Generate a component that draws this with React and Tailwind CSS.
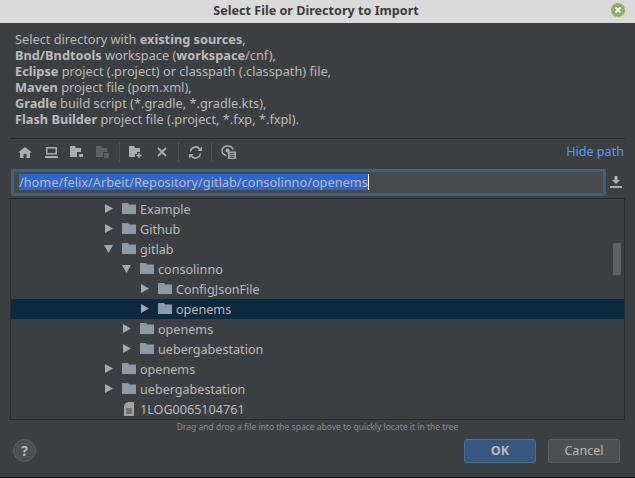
import React from "react";

const font = { fontFamily: '"Noto Sans", sans-serif' };

const Folder = () => (
  <svg width="14" height="12" viewBox="0 0 14 12" className="shrink-0 mr-[4px]">
    <path d="M0 0h6l1 1.500h7V11H0z" fill="#8c9aa5" />
  </svg>
);

const Arrow = ({ open }) => (
  <svg width="9" height="9" viewBox="0 0 9 9" className="shrink-0 mb-[1px]">
    {open ? <path d="M0 1h9L4.500 9z" fill="#a8a8a8" /> : <path d="M1 0l8 4.500L1 9z" fill="#a8a8a8" />}
  </svg>
);

const Row = ({ depth, open, label, selected, file }) => (
  <div className={`h-5 flex items-center shrink-0 ${selected ? "bg-[#0d293e]" : ""}`}>
    <div className="flex items-center" style={{ paddingLeft: depth }}>
      <div className="w-[18px] flex">{!file && <Arrow open={open} />}</div>
      {file ? (
        <div className="w-[14px] mr-[4px] flex justify-center shrink-0">
          <svg width="10" height="14" viewBox="0 0 10 14">
            <path d="M4 0h6v14H0V4z" fill="#a0a4a7" />
            <path d="M0 3l3-3v3z" fill="#a0a4a7" />
            <path d="M2 7h6M2 9h6M2 11h6" stroke="#3c3f41" strokeWidth="1" />
          </svg>
        </div>
      ) : (
        <Folder />
      )}
      <span className="text-[12.6px] text-[#bbbbbb] leading-none pt-[2px]">{label}</span>
    </div>
  </div>
);

const Sep = () => <div className="w-px h-5 bg-[#515151] mx-[3px]" />;

const Btn = ({ children }) => <div className="w-[26px] h-5 flex items-center justify-center">{children}</div>;

export default function App() {
  return (
    <div className="w-[635px] h-[478px] flex flex-col bg-[#3c3f41] text-[#bbbbbb] overflow-hidden" style={font}>
      <div className="h-[23px] shrink-0 bg-[#dadada] relative flex items-center justify-center">
        <span className="font-bold text-[12.6px] text-[#3c3c3c] mr-[3px]">Select File or Directory to Import</span>
        <div className="absolute left-[611px] top-[3px] w-[14px] h-[14px] rounded-full bg-[#8eb163] flex items-center justify-center">
          <svg width="8" height="8" viewBox="0 0 8 8"><path d="M1.500 1.500l5 5M6.500 1.500l-5 5" stroke="#fff" strokeWidth="1.800" /></svg>
        </div>
      </div>
      <div className="pl-[15px] pt-[8px] text-[12.75px] leading-4 h-[115px] shrink-0">
        <div>Select directory with <b>existing sources</b>,</div>
        <div><b>Bnd/Bndtools</b> workspace (<b>workspace</b>/cnf),</div>
        <div><b>Eclipse</b> project (.project) or classpath (.classpath) file,</div>
        <div><b>Maven</b> project file (pom.xml),</div>
        <div><b>Gradle</b> build script (*.gradle, *.gradle.kts),</div>
        <div><b>Flash Builder</b> project file (.project, *.fxp, *.fxpl).</div>
      </div>
      <div className="mx-[10px] h-px bg-[#2b2b2b] shrink-0" />
      <div className="h-[26px] shrink-0 ml-[12px] mr-[11px] flex items-center">
        <Btn><svg width="14" height="11" viewBox="0 0 14 11"><path d="M7 0l7 5.500h-2V11H8.500V7h-3v4H2V5.500H0z" fill="#a9adb0" /></svg></Btn>
        <Btn><svg width="13" height="11" viewBox="0 0 13 11"><path d="M1 0h11v7.500H1zM2.500 1.500v4.500h8V1.500zM0 9h13v2H0z" fill="#a9adb0" fillRule="evenodd" /></svg></Btn>
        <Btn><svg width="14" height="12" viewBox="0 0 14 12"><path d="M0 0h5l1 2h5v4H7v5H0z" fill="#a9adb0" /><path d="M9 8h4v3H9z" fill="#a9adb0" /></svg></Btn>
        <Btn><svg width="14" height="12" viewBox="0 0 14 12"><path d="M0 0h5l1 2h5v4H7v5H0z" fill="#5e6163" /><path d="M8 7h5v5H8z" fill="#5e6163" /></svg></Btn>
        <Sep />
        <Btn><svg width="14" height="12" viewBox="0 0 14 12"><path d="M0 0h5l1 2h5v4H8v2H6v3H0z" fill="#a9adb0" /><path d="M10 7v5M7.500 9.500h5" stroke="#a9adb0" strokeWidth="1.500" /></svg></Btn>
        <Btn><svg width="10" height="10" viewBox="0 0 10 10"><path d="M1 1l8 8M9 1l-8 8" stroke="#a9adb0" strokeWidth="1.800" /></svg></Btn>
        <Sep />
        <Btn><svg width="13" height="13" viewBox="0 0 13 13" fill="none"><path d="M1.500 5.500A5 5 0 0 1 10.500 3" stroke="#a9adb0" strokeWidth="1.600" /><path d="M11.500 7.500A5 5 0 0 1 2.500 10" stroke="#a9adb0" strokeWidth="1.600" /><path d="M8.500 5h4.500V0.500zM4.500 8H0v4.500z" fill="#a9adb0" /></svg></Btn>
        <Sep />
        <Btn><svg width="15" height="14" viewBox="0 0 15 14" fill="none"><path d="M5.500 10.500C3 10 1 8 1 5.500S3.500 1 6.500 1s5 1.500 5.500 3.500" stroke="#a9adb0" strokeWidth="1.500" /><circle cx="6.500" cy="5.500" r="2" fill="#a9adb0" /><path d="M7 6.500h8V14H7z" fill="#a9adb0" /><path d="M8.500 8.500h5M8.500 10.500h5M8.500 12.500h5" stroke="#3c3f41" /></svg></Btn>
        <span className="ml-auto text-[12.6px] text-[#589df6]">Hide path</span>
      </div>
      <div className="h-[27px] shrink-0 mt-[4px] ml-[11px] mr-[10px] flex items-center">
        <div className="w-[595px] h-[27px] bg-[#45494a] border-[3px] border-[#3d6185] rounded-[2px] flex items-center pl-[5px] pb-[1px]">
          <span className="bg-[#2f65ca] text-[#bbbbbb] text-[12.75px] leading-[16px] border-r border-white">/home/felix/Arbeit/Repository/gitlab/consolinno/openems</span>
        </div>
        <svg width="12" height="12" viewBox="0 0 12 12" className="ml-auto mr-[3px] mb-[2px]"><path d="M4.500 0h3v4H10L6 8 2 4h2.500zM0 10h12v2H0z" fill="#a9adb0" /></svg>
      </div>
      <div className="mt-[2px] mx-[10px] h-[222px] shrink-0 border border-[#2b2b2b] flex flex-col relative overflow-hidden">
        <Row depth={93} label="Example" />
        <Row depth={93} label="Github" />
        <Row depth={93} open label="gitlab" />
        <Row depth={111} open label="consolinno" />
        <Row depth={129} label="ConfigJsonFile" />
        <Row depth={129} label="openems" selected />
        <Row depth={111} label="openems" />
        <Row depth={111} label="uebergabestation" />
        <Row depth={93} label="openems" />
        <Row depth={93} label="uebergabestation" />
        <Row depth={93} file label="1LOG0065104761" />
        <div className="absolute right-[3px] top-[44px] w-[8px] h-[32px] bg-[#5f6162]" />
      </div>
      <div className="h-[13px] shrink-0 text-center text-[8.5px] text-[#8c8c8c] leading-[13px]">Drag and drop a file into the space above to quickly locate it in the tree</div>
      <div className="flex-1 flex items-start px-[13px] pt-[6px] relative">
        <div className="w-[23px] h-[23px] rounded-full bg-[#4d5052] border border-[#5e6060] flex items-center justify-center text-[14px] font-bold text-[#b8b8b8]">?</div>
        <div className="ml-auto flex gap-[12px] mr-[2px]">
          <div className="w-[72px] h-[24px] rounded-[3px] bg-[#365880] border border-[#4c708c] flex items-center justify-center text-[12.6px] font-bold text-[#bbbbbb]">OK</div>
          <div className="w-[72px] h-[24px] rounded-[3px] bg-[#4c5052] border border-[#5e6060] flex items-center justify-center text-[12.6px] text-[#bbbbbb]">Cancel</div>
        </div>
      </div>
      <div className="h-px bg-[#111] shrink-0" />
    </div>
  );
}
